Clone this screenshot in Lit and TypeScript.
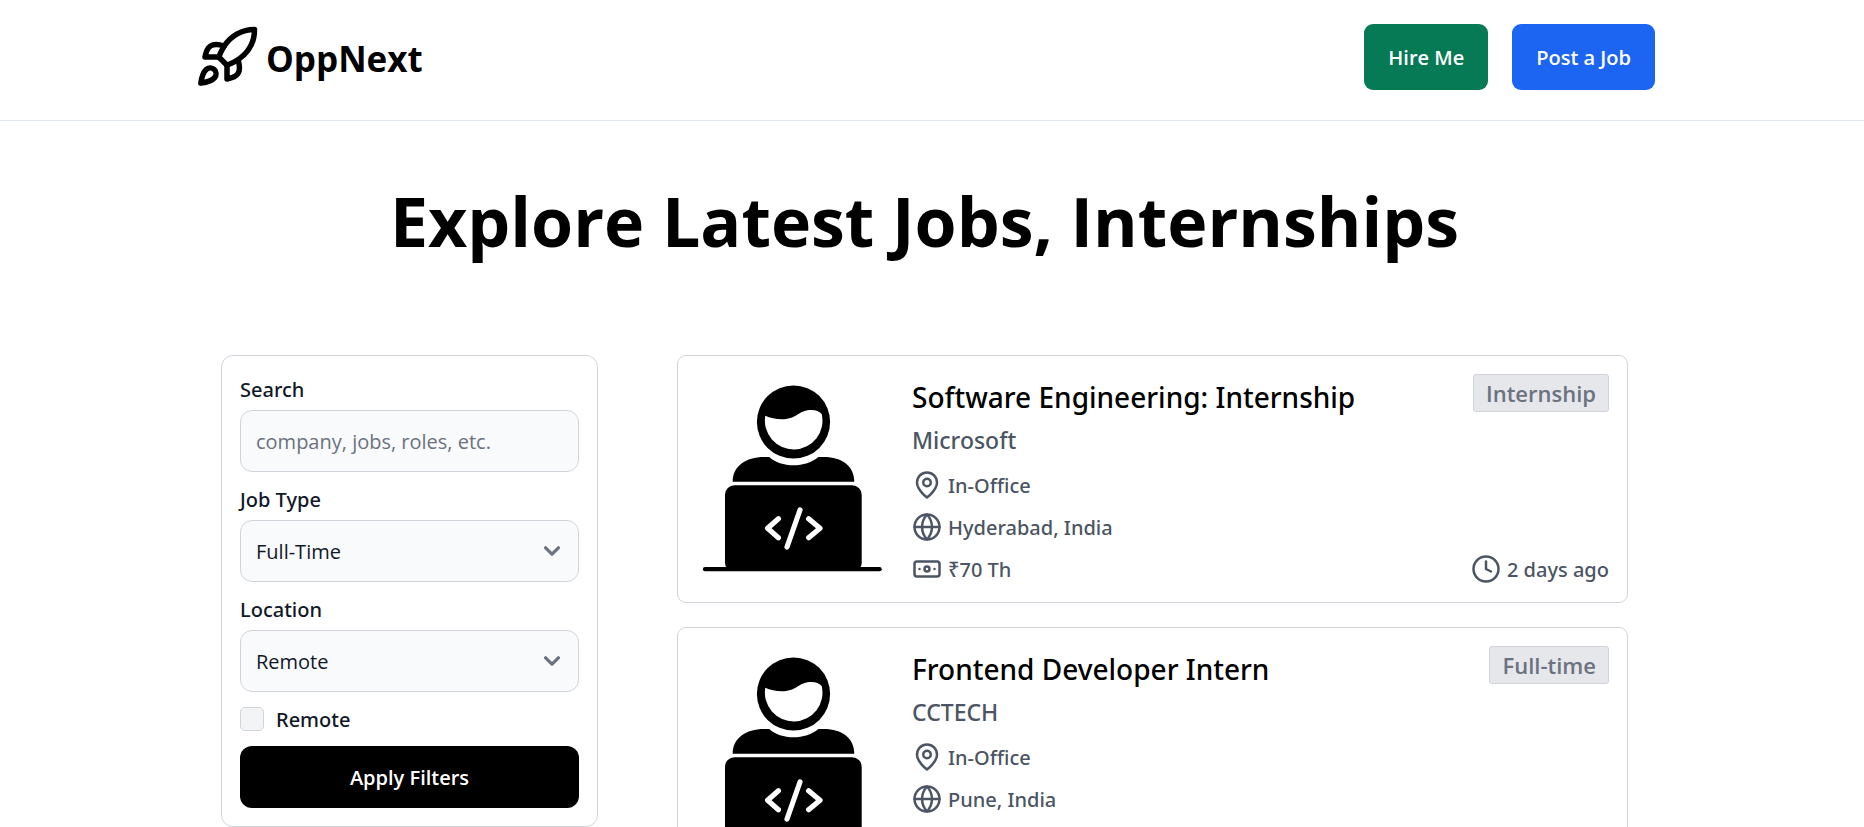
import { LitElement, html, css, svg } from "lit";
import { customElement, property } from "lit/decorators.js";

const sans = css`"Open Sans", "Noto Sans", sans-serif`;
const medium = css`"Noto Sans", "Open Sans", sans-serif`;

const icons = {
  pin: svg`<path d="M20 10c0 6-8 12-8 12s-8-6-8-12a8 8 0 0 1 16 0Z"/><circle cx="12" cy="10" r="3"/>`,
  globe: svg`<circle cx="12" cy="12" r="10"/><path d="M2 12h20M12 2a15.3 15.3 0 0 1 4 10 15.3 15.3 0 0 1-4 10 15.3 15.3 0 0 1-4-10 15.3 15.3 0 0 1 4-10z"/>`,
  cash: svg`<rect x="2" y="6" width="20" height="12" rx="2"/><circle cx="12" cy="12" r="2"/><path d="M6 12h.01M18 12h.01"/>`,
  clock: svg`<circle cx="12" cy="12" r="10"/><path d="M12 6v6l4 2"/>`,
  rocket: svg`<path d="M4.5 16.5c-1.5 1.26-2 5-2 5s3.74-.5 5-2c.71-.84.7-2.13-.09-2.91a2.18 2.18 0 0 0-2.91-.09z"/><path d="m12 15-3-3a22 22 0 0 1 2-3.95A12.88 12.88 0 0 1 22 2c0 2.72-.78 7.5-6 11a22.35 22.35 0 0 1-4 2z"/><path d="M9 12H4s.55-3.03 2-4c1.62-1.08 5 0 5 0"/><path d="M12 15v5s3.03-.55 4-2c1.08-1.62 0-5 0-5"/>`,
};

const icon = (name: keyof typeof icons) => html`<svg
  class="icon"
  viewBox="0 0 24 24"
  fill="none"
  stroke="currentColor"
  stroke-width="2"
  stroke-linecap="round"
  stroke-linejoin="round"
  aria-hidden="true"
>${icons[name]}</svg>`;

interface Job {
  title: string;
  company: string;
  mode: string;
  place: string;
  salary: string;
  type: string;
  posted: string;
}

const jobs: Job[] = [
  {
    title: "Software Engineering: Internship",
    company: "Microsoft",
    mode: "In-Office",
    place: "Hyderabad, India",
    salary: "₹70 Th",
    type: "Internship",
    posted: "2 days ago",
  },
  {
    title: "Frontend Developer Intern",
    company: "CCTECH",
    mode: "In-Office",
    place: "Pune, India",
    salary: "₹70 Th",
    type: "Full-time",
    posted: "2 days ago",
  },
];

@customElement("job-card")
export class JobCard extends LitElement {
  @property({ attribute: false }) job!: Job;

  static styles = css`
    :host {
      display: block;
      font-family: ${medium};
    }
    .card {
      display: flex;
      gap: 24px;
      padding: 18px;
      border: 1px solid #d1d5db;
      border-radius: 9px;
      color: #4b5563;
      font-size: 20px;
      font-weight: 500;
      line-height: 30px;
    }
    .picture {
      flex: none;
      width: 192px;
      height: 210px;
    }
    .details {
      flex: 1;
      min-width: 0;
      display: flex;
      flex-direction: column;
      gap: 12px;
    }
    .title {
      margin: 0;
      padding-top: 2px;
      color: #000;
      font-size: 28px;
      font-weight: 500;
      line-height: 42px;
    }
    .company {
      padding-top: 4px;
      font-size: 23px;
      line-height: 36px;
    }
    .row {
      display: flex;
      align-items: center;
      gap: 6px;
      line-height: 28px;
    }
    .row span {
      padding-top: 2px;
    }
    .icon {
      flex: none;
      width: 30px;
      height: 30px;
    }
    .side {
      display: flex;
      flex-direction: column;
      align-items: flex-end;
      justify-content: space-between;
    }
    .tag {
      padding: 3px 12px;
      border: 1px solid #d1d5db;
      border-radius: 3px;
      background: #e5e7eb;
      color: #6b7280;
      font-family: ${sans};
      font-size: 22px;
      font-weight: 600;
    }
  `;

  render() {
    const { job } = this;
    return html`<article class="card">
      <svg class="picture" viewBox="0 0 192 210" role="img" aria-label="Developer at a laptop">
        <circle cx="97.5" cy="48" r="36.6" />
        <path
          fill="#fff"
          d="M69.3 41.7C75 44.3 83 46 90 45 103 43 103 36 115.5 36 120 36 123 37.3 125.7 40A28.8 28.8 0 1 1 69.3 41.7Z"
        />
        <path
          d="M36.7 107.7C36.7 92 50 83 68 83H73.3C79 88.5 88 91.3 97.5 91.3S116 88.5 122.3 83H128C146 83 158.3 92 158.3 107.7Z"
        />
        <path
          d="M38.5 111.3H156.2A9.5 9.5 0 0 1 165.7 120.8V189Q165.7 192 163.7 194H31Q29 192 29 189V120.8A9.5 9.5 0 0 1 38.5 111.3Z"
        />
        <path stroke="#000" stroke-width="4.2" stroke-linecap="round" d="M9 195.2H183.6" />
        <path
          fill="none"
          stroke="#fff"
          stroke-width="5.2"
          stroke-linecap="round"
          stroke-linejoin="round"
          d="M82.4 144.8 71.6 154.3 82.4 163.7M104 136 91 173M112.6 144.8 124 154.3 112.6 163.7"
        />
      </svg>
      <div class="details">
        <div>
          <h2 class="title">${job.title}</h2>
          <div class="company">${job.company}</div>
        </div>
        <div class="row">${icon("pin")}<span>${job.mode}</span></div>
        <div class="row">${icon("globe")}<span>${job.place}</span></div>
        <div class="row">${icon("cash")}<span>${job.salary}</span></div>
      </div>
      <div class="side">
        <span class="tag">${job.type}</span>
        <div class="row">${icon("clock")}<span>${job.posted}</span></div>
      </div>
    </article>`;
  }
}

@customElement("filter-panel")
export class FilterPanel extends LitElement {
  static styles = css`
    :host {
      display: block;
      font-family: ${sans};
    }
    .panel {
      display: flex;
      flex-direction: column;
      gap: 12px;
      padding: 18px;
      border: 1px solid #d1d5db;
      border-radius: 12px;
      color: #111827;
      font-size: 20px;
      line-height: 30px;
    }
    .field {
      display: flex;
      flex-direction: column;
      gap: 6px;
    }
    .label {
      padding-top: 2px;
      font-family: ${medium};
      font-weight: 500;
      line-height: 28px;
    }
    .control {
      box-sizing: border-box;
      width: 100%;
      margin: 0;
      padding: 16px 15px 14px;
      border: 1px solid #d1d5db;
      border-radius: 12px;
      background: #f9fafb;
      color: #111827;
      font: inherit;
    }
    .control::placeholder {
      color: #6b7280;
      opacity: 1;
    }
    .select {
      appearance: none;
      background-image: url("data:image/svg+xml,%3Csvg xmlns='http://www.w3.org/2000/svg' fill='none' viewBox='0 0 10 6'%3E%3Cpath stroke='%236B7280' stroke-linecap='round' stroke-linejoin='round' stroke-width='2' d='m1 1 4 4 4-4'/%3E%3C/svg%3E");
      background-repeat: no-repeat;
      background-position: right 18px center;
      background-size: 16px 10px;
    }
    .check {
      display: flex;
      align-items: center;
      gap: 12px;
    }
    .box {
      appearance: none;
      box-sizing: border-box;
      width: 24px;
      height: 24px;
      margin: 0;
      border: 1px solid #d1d5db;
      border-radius: 5px;
      background: #f3f4f6;
    }
    .box:checked {
      background: #1c64f2;
    }
    .apply {
      padding: 17px 16px 15px;
      border: 0;
      border-radius: 12px;
      background: #000;
      color: #fff;
      font: inherit;
      font-weight: 600;
    }
  `;

  render() {
    return html`<form class="panel" @submit=${(e: Event) => e.preventDefault()}>
      <div class="field">
        <label class="label" for="search">Search</label>
        <input class="control" id="search" type="text" placeholder="company, jobs, roles, etc." />
      </div>
      <div class="field">
        <label class="label" for="type">Job Type</label>
        <select class="control select" id="type">
          <option>Full-Time</option>
          <option>Internship</option>
        </select>
      </div>
      <div class="field">
        <label class="label" for="location">Location</label>
        <select class="control select" id="location">
          <option>Remote</option>
          <option>In-Office</option>
        </select>
      </div>
      <div class="check">
        <input class="box" id="remote" type="checkbox" />
        <label class="label" for="remote">Remote</label>
      </div>
      <button class="apply" type="submit">Apply Filters</button>
    </form>`;
  }
}

@customElement("app-root")
export class AppRoot extends LitElement {
  static styles = css`
    :host {
      display: block;
      min-height: 100vh;
      background: #fff;
      color: #000;
      font-family: ${sans};
    }
    .header {
      padding: 24px 15px 30px 0;
      border-bottom: 1px solid #e2e8f0;
    }
    .bar {
      display: flex;
      align-items: center;
      justify-content: space-between;
      max-width: 1461px;
      margin: 0 auto;
    }
    .brand {
      display: flex;
      align-items: center;
      gap: 6px;
      color: inherit;
      font-size: 35px;
      font-weight: 700;
      text-decoration: none;
    }
    .brand span {
      padding-top: 2px;
    }
    .icon {
      width: 66px;
      height: 66px;
    }
    .actions {
      display: flex;
      gap: 24px;
    }
    .button {
      padding: 19px 24px 17px;
      border: 0;
      border-radius: 9px;
      color: #fff;
      font: 600 20px/30px ${sans};
    }
    .green {
      background: #057a55;
    }
    .blue {
      background: #1c64f2;
    }
    .main {
      padding: 0 15px 24px 0;
    }
    .heading {
      margin: 0;
      padding: 55px 0 89px;
      font-size: 68px;
      font-weight: 700;
      line-height: 90px;
      text-align: center;
    }
    .content {
      display: grid;
      grid-template-columns: 377px 1fr;
      align-items: start;
      gap: 79px;
      max-width: 1407px;
      margin: 0 auto;
    }
    .jobs {
      display: flex;
      flex-direction: column;
      gap: 24px;
    }
  `;

  render() {
    return html`
      <header class="header">
        <div class="bar">
          <a class="brand" href="#">${icon("rocket")}<span>OppNext</span></a>
          <div class="actions">
            <button class="button green" type="button">Hire Me</button>
            <button class="button blue" type="button">Post a Job</button>
          </div>
        </div>
      </header>
      <main class="main">
        <h1 class="heading">Explore Latest Jobs, Internships</h1>
        <div class="content">
          <filter-panel></filter-panel>
          <div class="jobs">${jobs.map((job) => html`<job-card .job=${job}></job-card>`)}</div>
        </div>
      </main>
    `;
  }
}
